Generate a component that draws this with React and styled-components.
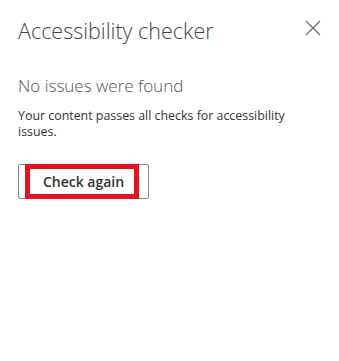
import React from 'react'
import styled, { createGlobalStyle } from 'styled-components'

const GlobalStyle = createGlobalStyle`
  html, body {
    margin: 0;
    padding: 0;
    background: #fff;
  }
  body {
    font-family: 'Open Sans', 'Noto Sans', sans-serif;
  }
`

const Pane = styled.div`
  width: 339px;
  height: 361px;
  box-sizing: border-box;
  padding: 16px 18px 0 18px;
  background: #fff;
`

const Header = styled.div`
  display: flex;
  justify-content: space-between;
  align-items: flex-start;
  height: 36px;
`

const Title = styled.h1`
  margin: 0;
  font-size: 21.5px;
  font-weight: 300;
  line-height: 30px;
  color: #444;
`

const CloseButton = styled.button`
  width: 16px;
  height: 16px;
  margin-top: 4px;
  padding: 0;
  border: none;
  background: none;
  display: flex;
  align-items: center;
  justify-content: center;
`

const Subtitle = styled.h2`
  margin: 22px 0 0 0;
  font-size: 17px;
  font-weight: 300;
  line-height: 24px;
  color: #555;
`

const Message = styled.p`
  margin: 10px 0 0 0;
  max-width: 290px;
  font-size: 12.4px;
  line-height: 16px;
  color: #333;
`

const ButtonWrap = styled.div`
  position: relative;
  display: inline-block;
  margin-top: 24px;
`

const ActionButton = styled.button`
  width: 131px;
  height: 35px;
  box-sizing: border-box;
  border: 1px solid #8a8a8a;
  border-radius: 2px;
  background: #fff;
  font-family: 'Open Sans', sans-serif;
  font-size: 14px;
  font-weight: 600;
  color: #333;
  padding: 0;
`

const Highlight = styled.div`
  position: absolute;
  left: 7px;
  top: 0;
  width: 114px;
  height: 35px;
  box-sizing: border-box;
  border: 5px solid #e81123;
  pointer-events: none;
`

const CloseIcon = () => (
  <svg width='16' height='16' viewBox='0 0 16 16'>
    <path d='M1 1 L15 15 M15 1 L1 15' stroke='#6b6b6b' strokeWidth='1.2' fill='none' />
  </svg>
)

export default function App () {
  return (
    <Pane>
      <GlobalStyle />
      <Header>
        <Title>Accessibility checker</Title>
        <CloseButton aria-label='Close'>
          <CloseIcon />
        </CloseButton>
      </Header>
      <Subtitle>No issues were found</Subtitle>
      <Message>Your content passes all checks for accessibility issues.</Message>
      <ButtonWrap>
        <ActionButton>Check again</ActionButton>
        <Highlight />
      </ButtonWrap>
    </Pane>
  )
}
